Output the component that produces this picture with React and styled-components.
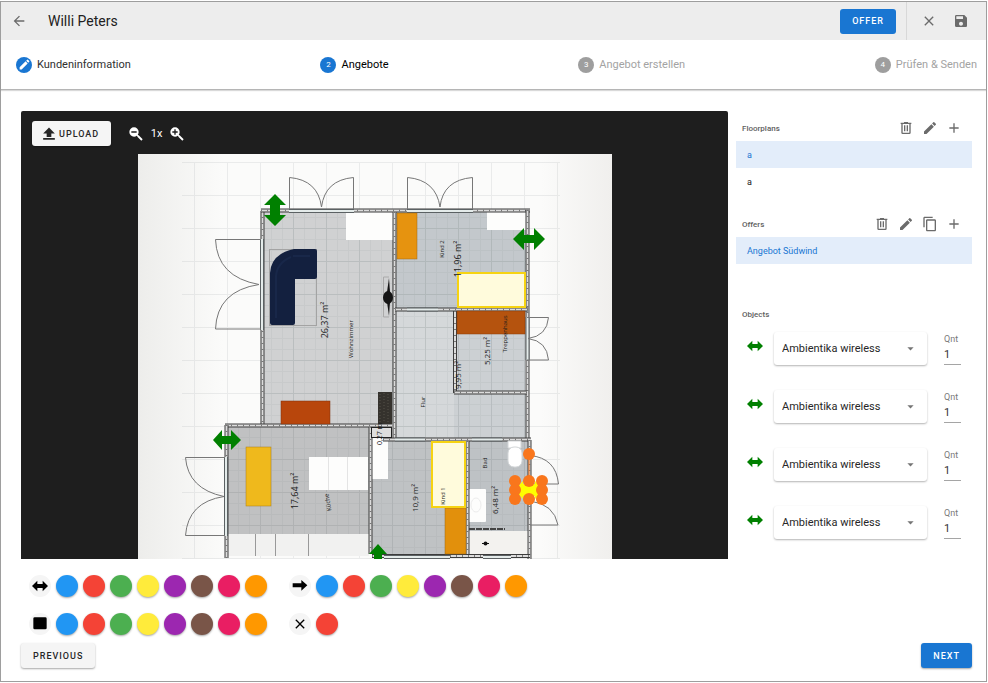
import React, { useState } from 'react';
import styled, { createGlobalStyle } from 'styled-components';
import {
  MdAdd,
  MdArrowBack,
  MdArrowDropDown,
  MdClose,
  MdContentCopy,
  MdEdit,
  MdSave,
} from 'react-icons/md';

const GlobalStyle = createGlobalStyle`
  * {
    box-sizing: border-box;
  }

  body {
    margin: 0;
    background: #fff;
    color: #212121;
    font-family: Roboto, 'Liberation Sans', sans-serif;
  }

  button,
  input,
  select {
    font-family: inherit;
  }
`;

const Page = styled.div`
  margin: 1px 1px 0 0;
  border: 1px solid #9e9e9e;
`;

const Header = styled.header`
  display: flex;
  align-items: center;
  height: 38px;
  padding-left: 6px;
  background: #ededed;
`;

const Title = styled.h1`
  flex: 1;
  margin: 0 0 0 17px;
  font-size: 14px;
  font-weight: 400;
`;

const HeaderActions = styled.div`
  display: flex;
  align-items: center;
  gap: 8px;
  height: 100%;
  margin-left: 10px;
  padding: 0 13px 0 10px;
  border-left: 1px solid #d8d8d8;
`;

const IconButton = styled.button`
  display: flex;
  align-items: center;
  justify-content: center;
  width: 24px;
  height: 24px;
  padding: 0;
  border: none;
  background: none;
  color: ${({ $light }) => ($light ? '#fff' : '#6b6b6b')};
  font-size: 16px;
  cursor: pointer;
`;

const Button = styled.button`
  display: flex;
  align-items: center;
  justify-content: center;
  gap: 3px;
  height: 25px;
  padding: 0 12px;
  border: none;
  border-radius: 3px;
  background: ${({ $primary }) => ($primary ? '#1976d2' : '#f5f5f5')};
  color: ${({ $primary }) => ($primary ? '#fff' : '#272727')};
  box-shadow: ${({ $flat }) =>
    $flat ? 'none' : '0 1px 2px rgba(0, 0, 0, 0.35)'};
  font-size: 9px;
  font-weight: 500;
  letter-spacing: 1px;
  text-transform: uppercase;
  cursor: pointer;

  svg {
    margin-left: -2px;
    font-size: 14px;
  }
`;

const Stepper = styled.ol`
  display: flex;
  justify-content: space-between;
  align-items: center;
  height: 50px;
  margin: 0;
  padding: 0 9px 0 15px;
  border-bottom: 1px solid #b5b5b5;
  box-shadow: 0 1px 1px rgba(0, 0, 0, 0.15);
  list-style: none;
`;

const Step = styled.li`
  display: flex;
  align-items: center;
  gap: 5px;
  color: ${({ $state }) =>
    ({ done: '#303030', active: '#000', open: '#a3a3a3' })[$state]};
  font-size: 11px;
`;

const StepBadge = styled.span`
  display: flex;
  align-items: center;
  justify-content: center;
  width: 16px;
  height: 16px;
  border-radius: 50%;
  background: ${({ $state }) => ($state === 'open' ? '#9e9e9e' : '#1976d2')};
  color: #fff;
  font-size: 8px;

  svg {
    font-size: 13px;
  }
`;

const Main = styled.main`
  display: flex;
  gap: 8px;
  padding: 21px 14px 0 20px;
`;

const Editor = styled.section`
  flex: 1;
  min-width: 0;
`;

const Canvas = styled.div`
  border-radius: 2px 2px 0 0;
  background: #1e1e1e;
`;

const CanvasToolbar = styled.div`
  display: flex;
  align-items: center;
  padding: 10px 11px 8px;
`;

const Zoom = styled.div`
  display: flex;
  align-items: center;
  margin-left: 13px;
  color: #fff;
  font-size: 11px;

  span {
    width: 17px;
    text-align: center;
  }
`;

const Plan = styled.svg`
  display: block;
  width: 474px;
  max-width: 100%;
  margin: 0 auto;
  font-family: 'Open Sans', sans-serif;
`;

const Palette = styled.div`
  display: grid;
  grid-template-columns: max-content max-content;
  gap: 16px 22px;
  padding: 16px 8px 0;
`;

const PaletteGroup = styled.div`
  display: flex;
  gap: 5px;
`;

const Tool = styled.span`
  display: flex;
  align-items: center;
  justify-content: center;
  width: 22px;
  height: 22px;
  border-radius: 50%;
  background: #f5f5f5;
  color: #000;
  font-size: 16px;
`;

const Swatch = styled.button`
  width: 22px;
  height: 22px;
  padding: 0;
  border: none;
  border-radius: 50%;
  background: ${({ $color }) => $color};
  box-shadow: 0 1px 2px rgba(0, 0, 0, 0.35);
  cursor: pointer;
`;

const Sidebar = styled.aside`
  width: 236px;
  padding-top: 4px;
`;

const SectionHeader = styled.div`
  display: flex;
  align-items: center;
  height: 26px;
  padding: 0 6px;
`;

const SectionTitle = styled.h2`
  flex: 1;
  margin: 0;
  color: #606060;
  font-size: 8px;
  font-weight: 500;
`;

const List = styled.ul`
  margin: 0 0 ${({ $gap }) => $gap}px;
  padding: 0;
  list-style: none;
`;

const ListItem = styled.button`
  display: block;
  width: 100%;
  height: 27px;
  padding: 0 11px;
  border: none;
  background: ${({ $selected }) => ($selected ? '#e3edfa' : 'none')};
  color: ${({ $selected }) => ($selected ? '#1976d2' : '#212121')};
  font-size: 9px;
  text-align: left;
  cursor: pointer;
`;

const Objects = styled.div`
  display: flex;
  flex-direction: column;
  gap: 24px;
  padding-top: 4px;
`;

const ObjectRow = styled.div`
  display: flex;
  align-items: center;
  height: 34px;
  padding: 0 11px;
  color: green;

  > svg {
    margin: 0 11px 4px 0;
    font-size: 16px;
  }
`;

const SelectBox = styled.label`
  display: grid;
  flex: 1;
  align-items: center;
  border-radius: 3px;
  background: #fff;
  box-shadow: 0 1px 2px rgba(0, 0, 0, 0.3);
  color: #757575;

  > * {
    grid-area: 1 / 1;
  }

  svg {
    justify-self: end;
    margin-right: 9px;
    font-size: 15px;
    pointer-events: none;
  }
`;

const Select = styled.select`
  width: 100%;
  height: 33px;
  padding: 0 8px;
  border: none;
  background: none;
  color: #272727;
  font-size: 11px;
  appearance: none;
`;

const Quantity = styled.label`
  width: 17px;
  margin-left: 17px;
  padding-top: 2px;
  color: #7a7a7a;
  font-size: 9px;
  line-height: 12px;
`;

const QuantityInput = styled.input`
  display: block;
  width: 100%;
  height: 20px;
  padding: 0;
  border: none;
  border-bottom: 1px solid #a5a5a5;
  background: none;
  color: #333;
  font-size: 11px;
`;

const Footer = styled.footer`
  display: flex;
  justify-content: space-between;
  padding: 8px 14px 13px 20px;
`;

const Icon = ({ d }) => (
  <svg width="1em" height="1em" viewBox="0 0 24 24" fill="currentColor">
    <path d={d} />
  </svg>
);

const GLASS =
  'M9,2A7,7 0 0,1 16,9C16,10.57 15.5,12 14.61,13.19L15.41,14H16L22,20L20,22L14,16V15.41L13.19,14.61C12,15.5 10.57,16 9,16A7,7 0 0,1 2,9A7,7 0 0,1 9,2';

const icons = {
  zoomOut: `${GLASS}M5,8V10H13V8H5Z`,
  zoomIn: `${GLASS}M8,5V8H5V10H8V13H10V10H13V8H10V5H8Z`,
  trash:
    'M9,3V4H4V6H5V19A2,2 0 0,0 7,21H17A2,2 0 0,0 19,19V6H20V4H15V3H9M7,6H17V19H7V6M9,8V17H11V8H9M13,8V17H15V8H13Z',
  upload: 'M8 17V11H2L12 1L22 11H16V17H8M2 19H22V22H2Z',
  both: 'M0 12L8 4V9H16V4L24 12L16 20V15H8V20Z',
  right: 'M1 8H14V3L23 11L14 19V14H1Z',
  square: 'M4 2H20Q22 2 22 4V18Q22 20 20 20H4Q2 20 2 18V4Q2 2 4 2Z',
};

const COLORS = [
  ['Blau', '#2196f3'],
  ['Rot', '#f44336'],
  ['Grün', '#4caf50'],
  ['Gelb', '#ffeb3b'],
  ['Lila', '#9c27b0'],
  ['Braun', '#795548'],
  ['Pink', '#e91e63'],
  ['Orange', '#ff9800'],
];

const PALETTE = [
  { id: 'both', icon: <Icon d={icons.both} />, colors: COLORS },
  { id: 'right', icon: <Icon d={icons.right} />, colors: COLORS },
  { id: 'square', icon: <Icon d={icons.square} />, colors: COLORS },
  { id: 'cross', icon: <MdClose />, colors: [COLORS[1]] },
];

const STEPS = [
  { label: 'Kundeninformation', state: 'done' },
  { label: 'Angebote', state: 'active' },
  { label: 'Angebot erstellen', state: 'open' },
  { label: 'Prüfen & Senden', state: 'open' },
];

// x, y, width, height
const ROOMS = [
  [264, 212, 129, 212, '#d0d1d2'],
  [396, 212, 130, 96, '#c3c8cc'],
  [395, 311, 59, 127, '#d5d8da'],
  [454, 394, 72, 44, '#ccd0d3'],
  [457, 311, 68, 80, '#ccd0d3'],
  [228, 427, 141, 107, '#c0c1c2'],
  [372, 441, 94, 113, '#bfc2c4'],
  [469, 441, 59, 90, '#bec2c5'],
];

const WALLS = [
  'M262.5 211V424',
  'M261 210.5H530',
  'M394.5 212V438',
  'M527.5 210V439',
  'M395 309.5H528',
  'M455 311V393',
  'M454 392.5H527',
  'M225 425.5H392',
  'M226.5 425V558',
  'M370.5 427V554',
  'M383 439.5H531',
  'M467.5 441V557',
  'M529.5 440V559',
  'M372 556H530',
];

const WINDOWS = [
  'M289 211H354',
  'M407 211H473',
  'M262 239V330',
  'M226 457V536',
  'M407 309.5H438',
  'M395 439.5H425',
  'M472 439.5H502',
  'M384 557H450',
  'M483 557H511',
  'M527.5 317V360',
];

const DOORS =
  'M289.500 209V177.500Q318 180 321.500 207Q325 180 353.500 177.500V209 M407.500 209V177.500Q436 180 440 207Q443 180 472.500 177.500V209 M261 239.500H215.500Q217 277 259 284.500Q217 291 215.500 329H261 M225 457.500H185.500Q188 489 224 496.500Q188 502 185.500 535.500H225 M527 317.500H548.500Q547 336 528 338.500Q547 341 548.500 360H527 M530 455.500Q556 458 558.500 484H530 M530 501Q554 504 558 525H530';

// x, y, size, text, angle
const LABELS = [
  [328, 320, 9, '26,37 m²'],
  [353, 339, 6, 'Wohnzimmer'],
  [444, 249, 6, 'Kind 2'],
  [461, 259, 9, '11,96 m²'],
  [490, 351, 8, '5,25 m²'],
  [507, 334, 6, 'Treppenhaus'],
  [461, 375, 8, '9,95 m²'],
  [425, 402, 6, 'Flur'],
  [298, 491, 9, '17,64 m²'],
  [330, 502, 6, 'Küche', -100],
  [418, 498, 8, '10,9 m²'],
  [445, 496, 6, 'Kind 1'],
  [487, 463, 6, 'Bad'],
  [498, 500, 8, '6,48 m²'],
  [382, 434, 7, '0,27 m'],
];

const HANDLES = [
  [529, 454],
  [515, 481],
  [529, 481],
  [542, 481],
  [515, 490],
  [542, 490],
  [515, 499],
  [529, 499],
  [542, 499],
];

function FloorPlan() {
  return (
    <Plan viewBox="138 154 474 405" role="img" aria-label="Floorplan">
      <defs>
        <linearGradient id="paper" x1="0" x2="1">
          <stop offset="0" stopColor="#ededeb" />
          <stop offset="0.18" stopColor="#fbfbfa" />
          <stop offset="0.85" stopColor="#fbfbfa" />
          <stop offset="1" stopColor="#f0efed" />
        </linearGradient>
        <pattern
          id="grid"
          x="194"
          y="162"
          width="33"
          height="33"
          patternUnits="userSpaceOnUse"
        >
          <path d="M0.500 0V33M0 0.500H33" stroke="#8a8f94" opacity="0.3" />
        </pattern>
        <pattern
          id="fineGrid"
          x="194"
          y="162"
          width="11"
          height="11"
          patternUnits="userSpaceOnUse"
        >
          <path d="M0.500 0V11M0 0.500H11" stroke="#7c8185" opacity="0.1" />
        </pattern>
      </defs>

      <rect x="138" y="154" width="474" height="405" fill="url(#paper)" />
      <rect x="182" y="162" width="378" height="397" fill="url(#grid)" opacity="0.5" />

      {ROOMS.map(([x, y, width, height, fill]) => (
        <g key={`${x}-${y}`}>
          <rect x={x} y={y} width={width} height={height} fill={fill} />
          <rect x={x} y={y} width={width} height={height} fill="url(#grid)" opacity="0.7" />
          <rect x={x} y={y} width={width} height={height} fill="url(#fineGrid)" />
        </g>
      ))}

      <g fill="#fdfdfc">
        <rect x="346" y="212" width="47" height="28" />
        <rect x="487" y="212" width="39" height="18" />
        <rect x="372" y="427" width="16" height="52" />
        <rect x="309" y="457" width="59" height="33" />
        <rect x="228" y="534" width="141" height="22" fill="#f1f1f0" />
        <rect x="468" y="489" width="18" height="33" rx="1" />
        <rect x="469" y="531" width="58" height="26" fill="#f3f2ef" />
      </g>
      <path d="M328.500 457V490M347.500 457V490" stroke="#e4e4e4" />
      <path d="M255.500 534V556M275.500 534V556M308.500 534V556" stroke="#999" />

      <g fill="none">
        {WALLS.map((d) => (
          <g key={d}>
            <path d={d} stroke="#3c3c3c" strokeWidth="4" />
            <path d={d} stroke="#dcdcdc" strokeWidth="2" />
            <path
              d={d}
              stroke="#777"
              strokeWidth="2"
              strokeDasharray="1 5"
            />
          </g>
        ))}
        {WINDOWS.map((d) => (
          <g key={d}>
            <path d={d} stroke="#5b6163" strokeWidth="4" />
            <path d={d} stroke="#e4ebea" strokeWidth="2" />
          </g>
        ))}
        <path d={DOORS} stroke="#777" />
      </g>

      <g strokeWidth="0.500">
        <rect x="397" y="213" width="20" height="46" fill="#e6930f" stroke="#9c6a16" />
        <rect x="457" y="311" width="68" height="23" fill="#b5530e" stroke="#8a3e08" />
        <rect x="281" y="401" width="49" height="23" fill="#b8460c" stroke="#7c320c" />
        <rect x="246" y="447" width="25" height="59" fill="#efb91c" stroke="#a77c1a" />
        <rect x="445" y="508" width="21" height="46" fill="#e2900c" stroke="#9c6a16" />
      </g>
      <g fill="#fffbdc" stroke="#f6d312" strokeWidth="2">
        <rect x="458" y="273" width="67" height="34" />
        <rect x="432" y="442" width="33" height="65" />
      </g>

      <rect x="269.500" y="249.500" width="47" height="76" fill="none" stroke="#a3a3a3" />
      <path
        d="M294 249H315Q317 249 317 251V277Q317 279 315 279H295V323Q295 325 293 325H272Q270 325 270 323V273Q271 254 294 249Z"
        fill="#13203f"
      />
      <path
        d="M293 256H310M276 318V276Q277 263 291 257"
        fill="none"
        stroke="#182749"
        strokeWidth="2"
      />
      <rect x="378" y="392" width="14" height="32" fill="#35322d" />
      <path
        d="M380 394V423M384 393V423M388 394V423"
        stroke="#57534a"
        strokeDasharray="1 2"
      />
      <rect x="371.500" y="427.500" width="20" height="10" fill="#dedede" stroke="#222" />
      <path d="M383.500 277H389M383.500 277V317H389" fill="none" stroke="#aaa" />
      <path d="M389 278L390 292V302L389 316L387 302V292Z" fill="#151515" />
      <ellipse cx="388" cy="297.500" rx="5" ry="6.500" fill="#151515" />
      <g fill="#fff" stroke="#d3d6d8">
        <path d="M508 441H521V448H508Z" />
        <rect x="508" y="447" width="14" height="20" rx="6" />
      </g>
      <ellipse cx="476" cy="505" rx="5" ry="7" fill="none" stroke="#ececec" />
      <path d="M469 529H505" stroke="#444" strokeWidth="2" strokeDasharray="6 1" />
      <circle cx="485.500" cy="543.500" r="2" fill="#111" />
      <path d="M482 543.500H489" stroke="#111" />

      <g fill="#1b1b1b" textAnchor="middle">
        {LABELS.map(([x, y, size, text, angle = -90]) => (
          <text
            key={text}
            x={x}
            y={y}
            fontSize={size}
            fontWeight={size > 6 ? 500 : 400}
            transform={`rotate(${angle} ${x} ${y})`}
          >
            {text}
          </text>
        ))}
      </g>

      <g fill="green">
        <path d="M275 194L286 205H280V215H286L275 226L264 215H270V205H264Z" />
        <path d="M513 239L524 228V235H534V228L545 239L534 250V243H524V250Z" />
        <path d="M213 440L222 430V436H231V430L241 440L231 450V444H222V450Z" />
        <path d="M378 544L387 554H382V559H374V554H369Z" />
      </g>

      <path d="M529 454V481" stroke="#f97316" />
      <path d="M514 490L523 481V486H535V481L544 490L535 499V494H523V499Z" fill="#ff0" />
      <rect x="522" y="484" width="14" height="12" fill="#ff0" />
      <g fill="#f9761c">
        {HANDLES.map(([cx, cy]) => (
          <circle key={`${cx}-${cy}`} cx={cx} cy={cy} r="6" />
        ))}
      </g>
    </Plan>
  );
}

function ObjectItem({ index, quantity, onChange }) {
  return (
    <ObjectRow>
      <Icon d={icons.both} />
      <SelectBox>
        <Select aria-label={`Object ${index + 1}`} defaultValue="wireless">
          <option value="wireless">Ambientika wireless</option>
        </Select>
        <MdArrowDropDown />
      </SelectBox>
      <Quantity>
        Qnt
        <QuantityInput
          type="text"
          inputMode="numeric"
          value={quantity}
          onChange={(e) => onChange(index, e.target.value)}
        />
      </Quantity>
    </ObjectRow>
  );
}

export default function App() {
  const [floorplan, setFloorplan] = useState(0);
  const [quantities, setQuantities] = useState(['1', '1', '1', '1']);

  const handleQuantity = (index, value) => {
    setQuantities(quantities.map((q, i) => (i === index ? value : q)));
  };

  return (
    <>
      <GlobalStyle />
      <Page>
        <Header>
          <IconButton aria-label="Back">
            <MdArrowBack />
          </IconButton>
          <Title>Willi Peters</Title>
          <Button $primary $flat>
            Offer
          </Button>
          <HeaderActions>
            <IconButton aria-label="Close">
              <MdClose />
            </IconButton>
            <IconButton aria-label="Save">
              <MdSave />
            </IconButton>
          </HeaderActions>
        </Header>

        <Stepper>
          {STEPS.map(({ label, state }, idx) => (
            <Step key={label} $state={state}>
              <StepBadge $state={state}>
                {state === 'done' ? <MdEdit /> : idx + 1}
              </StepBadge>
              {label}
            </Step>
          ))}
        </Stepper>

        <Main>
          <Editor>
            <Canvas>
              <CanvasToolbar>
                <Button>
                  <Icon d={icons.upload} />
                  Upload
                </Button>
                <Zoom>
                  <IconButton $light aria-label="Zoom out">
                    <Icon d={icons.zoomOut} />
                  </IconButton>
                  <span>1x</span>
                  <IconButton $light aria-label="Zoom in">
                    <Icon d={icons.zoomIn} />
                  </IconButton>
                </Zoom>
              </CanvasToolbar>
              <FloorPlan />
            </Canvas>

            <Palette>
              {PALETTE.map(({ id, icon, colors }) => (
                <PaletteGroup key={id}>
                  <Tool>{icon}</Tool>
                  {colors.map(([name, color]) => (
                    <Swatch key={name} $color={color} aria-label={name} />
                  ))}
                </PaletteGroup>
              ))}
            </Palette>
          </Editor>

          <Sidebar>
            <SectionHeader>
              <SectionTitle>Floorplans</SectionTitle>
              <IconButton aria-label="Delete floorplan">
                <Icon d={icons.trash} />
              </IconButton>
              <IconButton aria-label="Edit floorplan">
                <MdEdit />
              </IconButton>
              <IconButton aria-label="Add floorplan">
                <MdAdd />
              </IconButton>
            </SectionHeader>
            <List $gap={16}>
              {['a', 'a'].map((name, idx) => (
                <li key={idx}>
                  <ListItem
                    $selected={idx === floorplan}
                    onClick={() => setFloorplan(idx)}
                  >
                    {name}
                  </ListItem>
                </li>
              ))}
            </List>

            <SectionHeader>
              <SectionTitle>Offers</SectionTitle>
              <IconButton aria-label="Delete offer">
                <Icon d={icons.trash} />
              </IconButton>
              <IconButton aria-label="Edit offer">
                <MdEdit />
              </IconButton>
              <IconButton aria-label="Copy offer">
                <MdContentCopy />
              </IconButton>
              <IconButton aria-label="Add offer">
                <MdAdd />
              </IconButton>
            </SectionHeader>
            <List $gap={37}>
              <li>
                <ListItem $selected>Angebot Südwind</ListItem>
              </li>
            </List>

            <SectionHeader>
              <SectionTitle>Objects</SectionTitle>
            </SectionHeader>
            <Objects>
              {quantities.map((quantity, idx) => (
                <ObjectItem
                  key={idx}
                  index={idx}
                  quantity={quantity}
                  onChange={handleQuantity}
                />
              ))}
            </Objects>
          </Sidebar>
        </Main>

        <Footer>
          <Button>Previous</Button>
          <Button $primary>Next</Button>
        </Footer>
      </Page>
    </>
  );
}
